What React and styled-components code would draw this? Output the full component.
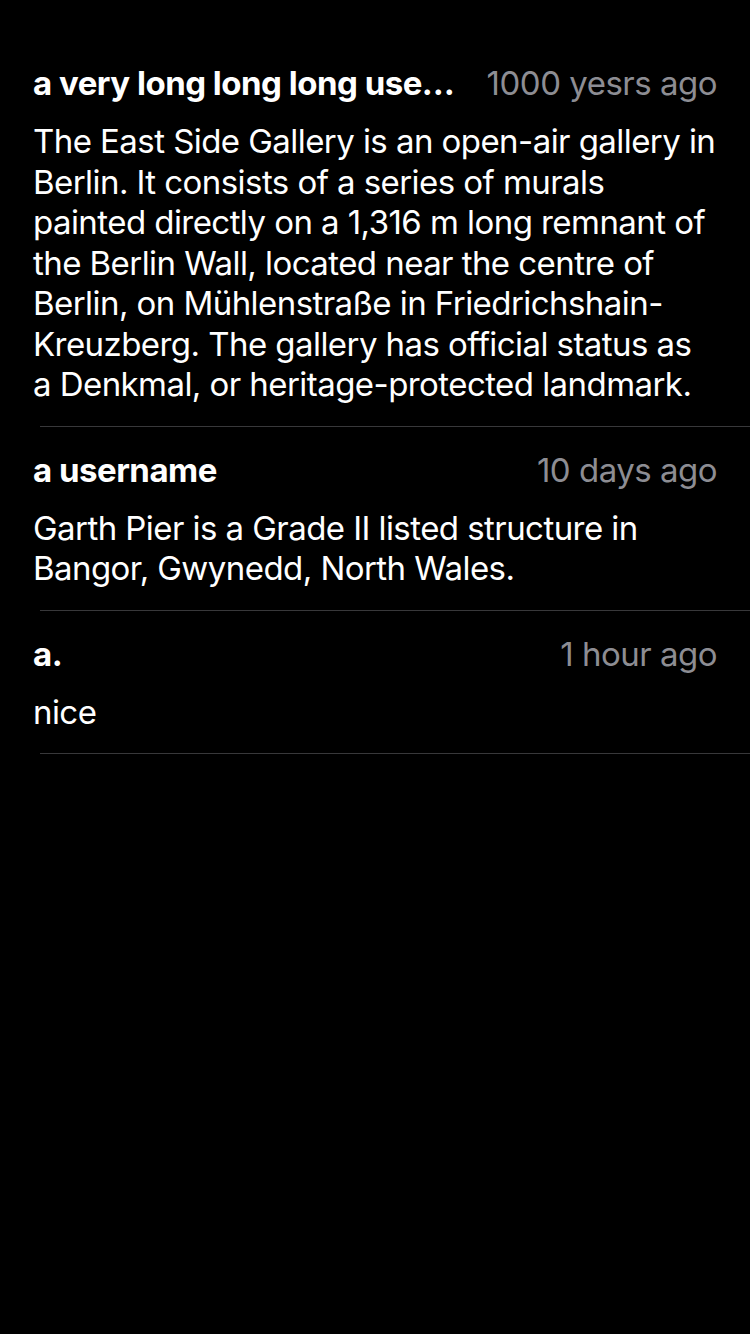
import React from "react";
import styled, { createGlobalStyle } from "styled-components";

const Global = createGlobalStyle`
  html, body {
    margin: 0;
    padding: 0;
    background: #000;
  }
  body {
    font-family: Inter, "Noto Sans", "Liberation Sans", sans-serif;
    -webkit-font-smoothing: antialiased;
  }
`;

const Page = styled.div`
  min-height: 1334px;
  background: #000;
  padding-top: 40px;
  box-sizing: border-box;
`;

const List = styled.ul`
  list-style: none;
  margin: 0;
  padding: 0;
`;

const Item = styled.li`
  display: flex;
  flex-direction: column;
`;

const Content = styled.div`
  padding: 22px 33px 21px 33px;
  display: flex;
  flex-direction: column;
  gap: 17px;
`;

const Header = styled.div`
  display: flex;
  align-items: center;
  gap: 24px;
  height: 42px;
`;

const Name = styled.span`
  flex: 1 1 auto;
  min-width: 0;
  white-space: nowrap;
  overflow: hidden;
  text-overflow: ellipsis;
  color: #fff;
  font-size: 33px;
  font-weight: 700;
  letter-spacing: -0.5px;
  line-height: 42px;
`;

const Time = styled.span`
  flex: 0 0 auto;
  color: #8d8d93;
  font-size: 33px;
  font-weight: 400;
  letter-spacing: -0.5px;
  line-height: 42px;
`;

const Body = styled.p`
  margin: 0;
  color: #fff;
  font-size: 33px;
  font-weight: 400;
  letter-spacing: -0.56px;
  line-height: 40.5px;
`;

const Divider = styled.div`
  height: 1px;
  margin-left: 40px;
  background: #38383a;
`;

const comments = [
  {
    name: "a very long long long username",
    time: "1000 yesrs ago",
    text:
      "The East Side Gallery is an open-air gallery in Berlin. It consists of a series of murals painted directly on a 1,316 m long remnant of the Berlin Wall, located near the centre of Berlin, on Mühlenstraße in Friedrichshain-Kreuzberg. The gallery has official status as a Denkmal, or heritage-protected landmark.",
  },
  {
    name: "a username",
    time: "10 days ago",
    text: "Garth Pier is a Grade II listed structure in Bangor, Gwynedd, North Wales.",
  },
  { name: "a.", time: "1 hour ago", text: "nice" },
];

export default function App() {
  return (
    <Page>
      <Global />
      <List>
        {comments.map((c, i) => (
          <Item key={i}>
            <Content>
              <Header>
                <Name>{c.name}</Name>
                <Time>{c.time}</Time>
              </Header>
              <Body>{c.text}</Body>
            </Content>
            <Divider />
          </Item>
        ))}
      </List>
    </Page>
  );
}
